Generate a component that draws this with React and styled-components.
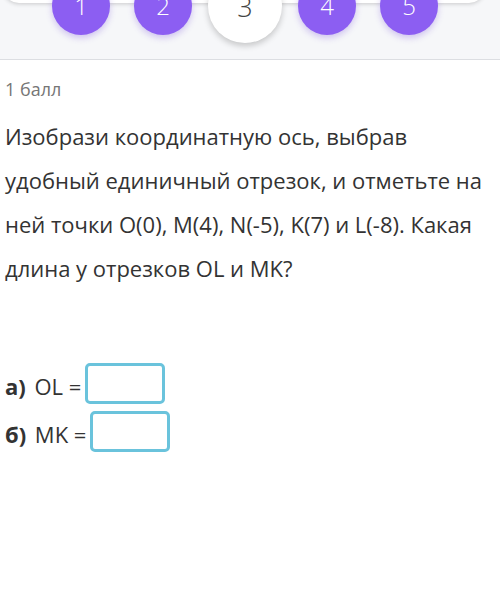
import React from "react";
import styled, { createGlobalStyle } from "styled-components";

const Global = createGlobalStyle`
  html, body { margin: 0; padding: 0; background: #ffffff; }
  body { font-family: "Open Sans", "Noto Sans", sans-serif; overflow: hidden; }
`;

const Header = styled.div`
  background: #f6f7f9;
  border-bottom: 1px solid #dcdee2;
  height: 59px;
  overflow: hidden;
  display: flex;
  flex-direction: column;
`;

const Card = styled.div`
  flex: none;
  height: 43px;
  margin: -40px 15px 0 3px;
  background: #ffffff;
  border-radius: 0 0 16px 16px;
  box-shadow: 0 1px 4px rgba(0, 0, 0, 0.18);
`;

const Steps = styled.div`
  flex: none;
  display: flex;
  justify-content: center;
  align-items: center;
  height: 74px;
  margin-top: -34px;
  padding-right: 10px;
  position: relative;
`;

const Slot = styled.div`
  width: 82px;
  display: flex;
  justify-content: center;
  align-items: center;
`;

const Circle = styled.div`
  width: ${(p) => (p.$active ? 74 : 58)}px;
  height: ${(p) => (p.$active ? 74 : 58)}px;
  border-radius: 50%;
  background: ${(p) => (p.$active ? "#ffffff" : "#8c5ef2")};
  color: ${(p) => (p.$active ? "#444444" : "#ffffff")};
  box-shadow: ${(p) =>
    p.$active
      ? "0 3px 6px rgba(0, 0, 0, 0.2)"
      : "0 3px 6px rgba(120, 80, 220, 0.3)"};
  display: flex;
  justify-content: center;
  align-items: center;
  font-size: ${(p) => (p.$active ? 27 : 24)}px;
  font-weight: 300;
  line-height: 1;
`;

const Content = styled.div`
  padding: 0 15px 0 5px;
`;

const Points = styled.div`
  margin-top: 17px;
  font-size: 18px;
  line-height: 24px;
  color: #767676;
`;

const Question = styled.p`
  margin: 13px 0 0;
  font-size: 22px;
  line-height: 44px;
  color: #333333;
`;

const Answers = styled.div`
  margin-top: 73px;
  display: flex;
  flex-direction: column;
  gap: 7px;
`;

const AnswerRow = styled.div`
  display: flex;
  align-items: center;
  gap: 4px;
`;

const Label = styled.span`
  font-size: 22px;
  line-height: 26px;
  color: #333333;
  margin-top: 5px;
  white-space: pre;
`;

const Letter = styled.b`
  font-weight: 700;
  margin-right: 3px;
`;

const Box = styled.div`
  width: 80px;
  height: 41px;
  box-sizing: border-box;
  border: 3px solid #6ac3dc;
  border-radius: 5px;
  background: #ffffff;
`;

const steps = [1, 2, 3, 4, 5];

export default function App() {
  return (
    <>
      <Global />
      <Header>
        <Card />
        <Steps>
          {steps.map((n) => (
            <Slot key={n}>
              <Circle $active={n === 3}>{n}</Circle>
            </Slot>
          ))}
        </Steps>
      </Header>
      <Content>
        <Points>1 балл</Points>
        <Question>
          Изобрази координатную ось, выбрав удобный единичный отрезок, и
          отметьте на ней точки O(0), M(4), N(-5), K(7) и L(-8). Какая длина у
          отрезков OL и MK?
        </Question>
        <Answers>
          <AnswerRow>
            <Label>
              <Letter>а)</Letter> OL =
            </Label>
            <Box />
          </AnswerRow>
          <AnswerRow>
            <Label>
              <Letter>б)</Letter> MK =
            </Label>
            <Box />
          </AnswerRow>
        </Answers>
      </Content>
    </>
  );
}
